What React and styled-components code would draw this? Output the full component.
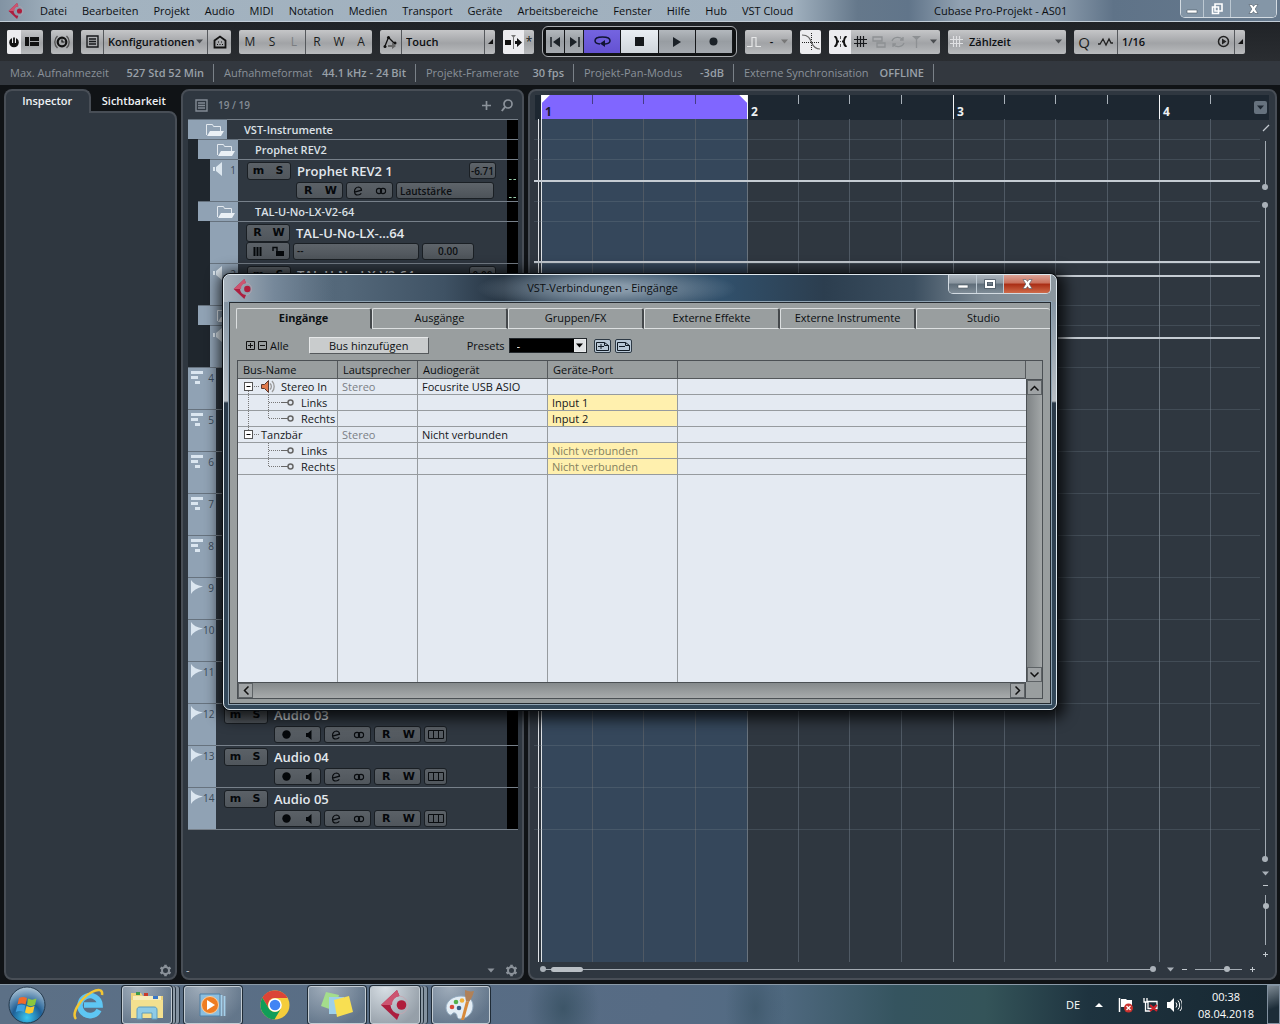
import React from "react";
import styled, { createGlobalStyle, css } from "styled-components";

const Global = createGlobalStyle`
  * { box-sizing: border-box; }
  html, body { margin: 0; height: 100%; background: #101316; }
  body { font-family: "Open Sans", "Noto Sans", sans-serif; font-size: 11px; line-height: 16px; color: #0c0f12; overflow: hidden; }
  button, select, input { font: inherit; color: inherit; margin: 0; padding: 0; border: 0; border-radius: 0; background: none; }
  svg { display: block; flex: none; }
  h1, h2, p { margin: 0; font-size: inherit; font-weight: inherit; }
`;

const Screen = styled.div`
  position: relative;
  display: flex;
  flex-direction: column;
  height: 100vh;
  min-height: 760px;
  overflow: hidden;
`;

/* ---------- menu bar ---------- */
const MenuBar = styled.header`
  display: flex;
  align-items: center;
  height: 22px;
  flex: none;
  padding-left: 8px;
  background: linear-gradient(90deg, #8293a3 0, #a3b3c0 60px, #a0b0be 62%, #65788b 67%, #61758a 71%, #91a1b1 75%, #91a1b1 82%, #5f7388 87%, #66798d 100%);
  border-bottom: 1px solid #c3ced8;
`;
const Menus = styled.nav`
  display: flex;
  gap: 15px;
  margin-left: 16px;
  flex: 1;
`;
const MenuItem = styled.button`
  line-height: 20px;
  white-space: nowrap;
`;
const WindowTitle = styled.h1`
  width: 134px;
  margin-right: 112px;
  white-space: nowrap;
`;
const Caption = styled.div`
  display: flex;
  align-self: flex-start;
  height: ${(p) => (p.$red ? 19 : 18)}px;
  margin-right: ${(p) => (p.$red ? 1 : 3)}px;
  border: 1px solid #d3dbe2;
  border-top: 0;
  border-radius: 0 0 5px 5px;
  overflow: hidden;
`;
const CaptionButton = styled.button`
  display: grid;
  place-items: center;
  width: ${(p) => p.$w}px;
  height: 100%;
  background: ${(p) => (p.$red ? "linear-gradient(#dba397, #c9705c 45%, #a92c14 50%, #cf6b4a)" : p.$dark ? "linear-gradient(#a9b3bc, #8b96a0 45%, #5f6d79 50%, #7f8c97)" : "#8496a7")};
  & + & { border-left: 1px solid #bcc8d2; }
`;

/* ---------- toolbar ---------- */
const Toolbar = styled.div`
  display: flex;
  align-items: center;
  gap: 8px;
  height: 39px;
  flex: none;
  padding: 0 7px;
  background: linear-gradient(#202327, #2a2d31);
`;
const Group = styled.div`
  display: flex;
  width: ${(p) => p.$w}px;
  height: 24px;
  flex: none;
  border-radius: 2px;
  overflow: hidden;
  background: linear-gradient(#c5c6c8, #a1a3a6 55%, #b9bbbd);
`;
const Tool = styled.button`
  display: grid;
  place-items: center;
  flex: ${(p) => (p.$w ? "none" : 1)};
  width: ${(p) => (p.$w ? p.$w + "px" : "auto")};
  height: 100%;
  font-size: ${(p) => (p.$big ? 15 : 12)}px;
  color: ${(p) => (p.$dim ? "#7a7d80" : "#1b1d20")};
  ${(p) => p.$on && css`background: #ececef;`}
  ${(p) => p.$line && css`border-left: 1px solid #55585c;`}
`;
const Pick = styled.label`
  display: flex;
  align-items: center;
  flex: 1;
  padding: 0 4px;
  ${(p) => p.$line && css`border-left: 1px solid #55585c;`}
`;
const PickSelect = styled.select`
  appearance: none;
  flex: 1;
  min-width: 0;
  height: 24px;
  font-weight: 600;
  outline: 0;
`;
const Transport = styled.div`
  display: flex;
  width: 195px;
  height: 31px;
  flex: none;
  padding: 3px;
  border: 1px solid #a9acb0;
  border-radius: 6px;
  background: #101214;
`;
const TransportButton = styled.button`
  display: grid;
  place-items: center;
  flex: ${(p) => p.$f};
  border-right: 1px solid #15171a;
  background: ${(p) => p.$bg || "linear-gradient(#b3b8bd, #989da2 50%, #a5aab0)"};
`;

/* ---------- info line ---------- */
const InfoLine = styled.dl`
  display: flex;
  align-items: center;
  height: 24px;
  flex: none;
  margin: 0 0 4px;
  background: #33383f;
  color: #8a9199;
`;
const InfoItem = styled.div`
  display: flex;
  justify-content: space-between;
  width: ${(p) => p.$w}px;
  height: 18px;
  padding: 1px 9px 0 10px;
  border-right: 1px solid #7a8188;
  white-space: nowrap;
  dt, dd { margin: 0; }
  dd { font-weight: 600; color: #99a0a8; }
`;

/* ---------- panels ---------- */
const Work = styled.main`
  display: flex;
  flex: 1;
  min-height: 0;
  gap: 4px;
  padding: 0 3px 4px 4px;
`;
const panel = css`
  background: #2f3740;
  border: 2px solid #484e56;
  border-radius: 8px;
`;
const Inspector = styled.aside`
  display: flex;
  flex-direction: column;
  width: 173px;
  flex: none;
`;
const Tabs = styled.div`display: flex;`;
const InspectorTab = styled.button`
  width: 88px;
  height: 24px;
  font-weight: 600;
  color: #eef1f4;
  ${(p) => p.$on && css`
    ${panel};
    border-bottom: 0;
    border-radius: 8px 8px 0 0;
    margin-bottom: -2px;
    padding-bottom: 2px;
    position: relative;
  `}
`;
const InspectorBody = styled.div`
  ${panel};
  border-top-left-radius: 0;
  flex: 1;
  display: flex;
  align-items: flex-end;
  justify-content: flex-end;
  padding: 0 3px 1px;
  margin-top: -2px;
`;
const TrackPanel = styled.section`
  ${panel};
  display: flex;
  flex-direction: column;
  width: 343px;
  flex: none;
`;
const TrackHeader = styled.div`
  display: flex;
  align-items: center;
  height: 28px;
  flex: none;
  gap: 10px;
  padding: 0 9px 0 12px;
  color: #838b94;
  font-size: 10px;
  font-weight: 600;
`;
const Spacer = styled.div`flex: 1;`;
const TrackRows = styled.ol`
  list-style: none;
  margin: 0 4px 0 5px;
  padding: 0;
  flex: 1;
  min-height: 0;
  overflow: hidden;
`;
const TrackRow = styled.li`
  display: flex;
  height: ${(p) => p.$h}px;
  padding-left: ${(p) => p.$indent}px;
  background: #1f262d;
`;
const Strip = styled.div`
  display: flex;
  justify-content: ${(p) => (p.$folder ? "flex-end" : "space-between")};
  width: ${(p) => p.$w}px;
  flex: none;
  padding: ${(p) => (p.$folder ? "3px 2px 0" : "2px 2px 0")};
  background: #90a2b4;
  border-top: 1px solid #66727e;
  color: #3b4a59;
  font-size: 10px;
`;
const TrackMain = styled.div`
  flex: 1;
  min-width: 0;
  border-top: 1px solid #77808a;
  background: #2f3740;
  padding: ${(p) => p.$pad || "1px 8px 0"};
`;
const Meter = styled.div`
  width: 11px;
  flex: none;
  border-top: 1px solid #77808a;
  background: #000;
`;
const MeterMarks = styled.div`
  display: flex;
  flex-direction: column;
  gap: 17px;
  padding: 19px 2px 0;
  &::before, &::after { content: ""; border-top: 1px dashed #9ccfae; }
`;
const FolderName = styled.span`
  display: block;
  padding-left: ${(p) => p.$x}px;
  font-weight: 600;
  line-height: 17px;
  color: #dbe0e6;
`;
const Line = styled.div`
  display: flex;
  align-items: center;
  gap: 3px;
  height: ${(p) => p.$h || 19}px;
  padding-left: ${(p) => p.$x || 0}px;
`;
const TrackName = styled.span`
  flex: 1;
  padding-left: 3px;
  font-size: 13px;
  font-weight: 600;
  color: #e3e8ed;
  white-space: nowrap;
`;
const Keys = styled.div`
  display: flex;
  width: ${(p) => p.$w || 44}px;
  height: ${(p) => p.$h || 18}px;
  flex: none;
  border: 1px solid #1a1f24;
  border-radius: 3px;
  background: linear-gradient(#5b6167, #50565c);
`;
const Key = styled.button`
  display: grid;
  place-items: center;
  flex: 1;
  min-width: 0;
  font: 700 11px/14px "DejaVu Sans", sans-serif;
  color: #05080b;
  & + & { border-left: ${(p) => (p.$join ? "0" : "1px solid #1a1f24")}; }
`;
const Field = styled.button`
  width: ${(p) => p.$w}px;
  height: 17px;
  flex: none;
  padding: ${(p) => (p.$center ? 0 : "0 3px")};
  border: 1px solid #1a1f24;
  border-radius: 3px;
  background: linear-gradient(#5e646a, #4d5359);
  font-size: 10px;
  font-weight: 600;
  line-height: 14px;
  text-align: ${(p) => (p.$center ? "center" : "left")};
`;
const PanelFoot = styled.div`
  display: flex;
  align-items: center;
  gap: 9px;
  height: 16px;
  flex: none;
  padding: 0 4px 0 3px;
  color: #c3c9cf;
`;

/* ---------- arrangement ---------- */
const Arrange = styled.section`
  ${panel};
  flex: 1;
  min-width: 0;
  display: flex;
  flex-direction: column;
  padding: 4px 6px 0 4px;
`;
const Ruler = styled.div`
  display: flex;
  height: 25px;
  flex: none;
  margin-bottom: -1px;
  padding-left: 6px;
  background: #1d2731;
  border-left: 1px solid #2f3740;
`;
const Bars = styled.div`
  display: flex;
  flex: 1;
  min-width: 0;
  overflow: hidden;
`;
const tick = (c) => `linear-gradient(${c}, ${c})`;
const Bar = styled.div`
  display: flex;
  align-items: flex-end;
  width: 206px;
  flex: none;
  padding-left: 3px;
  border-left: 1px solid #f4f6f8;
  font-size: 12px;
  font-weight: 700;
  color: ${(p) => (p.$on ? "#1c1c30" : "#eef1f4")};
  background: ${(p) => {
    const c = p.$on ? "#463b86" : "#a9b1b9";
    const corners = p.$on
      ? "linear-gradient(135deg, #fff 5px, transparent 6px), linear-gradient(225deg, #fff 5px, transparent 6px),"
      : "";
    return `${corners} ${tick(c)} 50px 0/1px 9px no-repeat, ${tick(c)} 101px 0/1px 9px no-repeat, ${tick(c)} 153px 0/1px 9px no-repeat, ${p.$on ? "#8066ff" : "#1d2731"}`;
  }};
`;
const RulerMenu = styled.button`
  display: grid;
  place-items: center;
  width: 13px;
  height: 13px;
  margin: 6px 2px 0 8px;
  border-radius: 2px;
  background: #66727e;
`;
const ArrangeBody = styled.div`
  display: flex;
  flex: 1;
  min-height: 0;
`;
const Grid = styled.div`
  flex: 1;
  min-width: 0;
  overflow: hidden;
  background:
    ${tick("#dfe3e7")} 4px 0/1px 100% no-repeat,
    ${tick("#dfe3e7")} 7px 0/1px 100% no-repeat,
    repeating-linear-gradient(90deg, transparent 0 50px, #4f5964 50px 51px, transparent 51px 101px, #4f5964 101px 102px, transparent 102px 153px, #4f5964 153px 154px, transparent 154px 205px, #69737d 205px 206px) 8px 0 no-repeat,
    ${tick("#35475b")} 8px 0/205px 100% no-repeat;
`;
const Lane = styled.div`
  height: ${(p) => p.$h}px;
  border-top: 1px solid rgba(120, 132, 144, 0.28);
  &:first-child { border-top-color: transparent; }
`;
const Automation = styled.div`
  margin-top: ${(p) => p.$y}px;
  height: 2px;
  background: #c5ccd3;
`;
const SideTools = styled.div`
  display: flex;
  flex-direction: column;
  align-items: center;
  width: 11px;
  flex: none;
  margin-right: -2px;
  padding: 5px 0 4px;
  gap: 6px;
`;
const VScroll = styled.div`
  position: relative;
  width: 1px;
  margin: 3px 0;
  flex: ${(p) => (p.$h ? "none" : 1)};
  height: ${(p) => (p.$h ? p.$h + "px" : "auto")};
  background: #a3abb3;
`;
const Dot = styled.i`
  position: absolute;
  width: 6px;
  height: 6px;
  border-radius: 3px;
  background: #a9b0b8;
  ${(p) => p.$at};
`;
const BottomTools = styled.div`
  display: flex;
  align-items: center;
  height: 16px;
  flex: none;
  gap: 8px;
  padding: 0 14px 2px 9px;
  color: #c3c9cf;
`;
const HScroll = styled.div`
  position: relative;
  flex: 1;
  height: 1px;
  margin-right: 6px;
  background: #a3abb3;
`;
const Thumb = styled.i`
  position: absolute;
  left: 8px;
  top: -2px;
  width: 32px;
  height: 5px;
  border-radius: 3px;
  background: #b9bfc5;
`;
const Zoom = styled.input`
  appearance: none;
  outline: 0;
  ${(p) => (p.$v ? "writing-mode: vertical-lr; width: 8px; height: 50px;" : "width: 47px; height: 8px;")}
  background: ${tick("#a3abb3")} center / ${(p) => (p.$v ? "1px 100%" : "100% 1px")} no-repeat;
  &::-webkit-slider-thumb {
    appearance: none;
    width: 6px;
    height: 6px;
    border-radius: 3px;
    background: #b0b7be;
  }
`;

/* ---------- dialog ---------- */
const DialogLayer = styled.div`
  position: absolute;
  inset: 0;
  display: flex;
  justify-content: center;
  align-items: flex-start;
  padding-top: 274px;
  pointer-events: none;
`;
const Dialog = styled.section`
  display: flex;
  flex-direction: column;
  width: 834px;
  height: 436px;
  padding: 0 5px 5px;
  pointer-events: auto;
  border: 1px solid #dfe8ee;
  border-radius: 7px;
  background: linear-gradient(#8796a4 0, #8796a4 28px, #b8bec4 126px, #2b3a49 128px, #33485a 100%);
  box-shadow: 0 0 0 1px #0b0f13, 2px 3px 14px 6px rgba(0, 0, 0, 0.75);
`;
const TitleBar = styled.header`
  display: flex;
  align-items: center;
  height: 27px;
  flex: none;
  margin: 0 -5px;
  padding: 0 4px 0 9px;
  border-radius: 6px 6px 0 0;
  background:
    radial-gradient(ellipse 130px 22px at 46% 50%, rgba(150, 167, 182, 0.85) 20%, transparent),
    linear-gradient(90deg, #a7b2bc 0, #76889a 50px, #51647600 110px),
    linear-gradient(90deg, #516476 0, #54687a 120px, #3f5264 220px, #263442 280px, #33475a 340px, #31506b 500px, #2c3e4f 600px, #3c4f60 690px, #7d8a95 760px, #8c979f 100%);
`;
const DialogTitle = styled.h2`
  flex: 1;
  padding: 0 0 2px 4px;
  text-align: center;
`;
const Client = styled.div`
  display: flex;
  flex-direction: column;
  flex: 1;
  min-height: 0;
  padding: 5px 0 4px;
  border: 1px solid #242a30;
  outline: 1px solid #8fa3b3;
  background: #999e9f;
`;
const DialogTabs = styled.div`
  display: flex;
  margin-left: 6px;
`;
const DialogTab = styled.button`
  flex: 1;
  height: 21px;
  padding-bottom: 2px;
  border-top: 1px solid #dcdfe0;
  border-left: 1px solid #dcdfe0;
  border-right: 2px solid #44484b;
  border-bottom: 1px solid ${(p) => (p.$on ? "transparent" : "#dcdfe0")};
  border-radius: 2px 3px 0 0;
  font-weight: ${(p) => (p.$on ? 700 : 400)};
  &:last-child { border-right: 0; }
`;
const Options = styled.div`
  display: flex;
  align-items: center;
  height: 31px;
  flex: none;
  padding: 2px 16px 0;
  gap: 4px;
`;
const TreeToggle = styled.button`
  display: flex;
  align-items: center;
  gap: 3px;
`;
const AddBus = styled.button`
  width: 120px;
  height: 17px;
  margin: 0 34px 0 16px;
  background: #c9cccd;
  border: 1px solid;
  border-color: #e6e8e9 #55595c #55595c #e6e8e9;
  line-height: 14px;
`;
const PresetBox = styled.div`
  display: flex;
  width: 78px;
  height: 15px;
  margin-right: 3px;
  border: 1px solid #23282c;
  background: #000;
`;
const PresetSelect = styled.select`
  appearance: none;
  flex: 1;
  padding-left: 7px;
  color: #fff;
  line-height: 13px;
  outline: 0;
`;
const SmallButton = styled.button`
  display: grid;
  place-items: center;
  width: ${(p) => p.$w || 17}px;
  height: ${(p) => p.$h || 14}px;
  border: 1px solid ${(p) => (p.$light ? "#e9ebec" : "#2d3944")};
  border-radius: ${(p) => (p.$light ? 0 : 2)}px;
  background: ${(p) => (p.$light ? "#dfe2e4" : "#b9c8d6")};
`;
const TableFrame = styled.div`
  display: grid;
  grid-template: minmax(0, 1fr) 16px / minmax(0, 1fr) 16px;
  flex: 1;
  min-height: 0;
  margin: 0 7px 0 7px;
  border: 1px solid #4b5054;
  background: #999e9f;
`;
const BusTable = styled.table`
  width: 100%;
  height: 100%;
  table-layout: fixed;
  border-collapse: separate;
  border-spacing: 0;
  background: #e4eaf2;
  th, td {
    height: 16px;
    padding: 0 0 0 4px;
    border-right: 1px solid #969b9f;
    border-bottom: 1px solid #969b9f;
    line-height: 15px;
    text-align: left;
    font-weight: 400;
    white-space: nowrap;
    overflow: hidden;
  }
  th { height: 18px; padding-left: 5px; border-color: #55595c; background: #999e9f; }
  td:last-child { border-right: 0; }
`;
const Cell = styled.td`
  color: ${(p) => (p.$dim ? "#7b7f86" : "#14171a")};
  ${(p) => p.$port && css`background: #fff0ae; ${p.$dim && "color: #84805f;"}`}
`;
const RestRow = styled.tr`
  && td { height: auto; border-bottom: 0; }
`;
const NameCell = styled.div`
  display: flex;
  height: 15px;
  margin-left: -4px;
`;
const ScrollColumn = styled.div`
  display: flex;
  flex-direction: column;
  justify-content: space-between;
  margin-top: 18px;
  border: solid #4b5054;
  border-width: 1px 0 0 1px;
  background: linear-gradient(90deg, #7f8486, #a3a7a8);
`;
const ScrollRow = styled.div`
  display: flex;
  justify-content: space-between;
  border: solid #4b5054;
  border-width: 1px 1px 0 0;
  background: linear-gradient(#858a8c, #a8abac);
`;
const ScrollButton = styled.button`
  display: grid;
  place-items: center;
  width: 15px;
  height: 15px;
  border: 1px solid #5d6265;
  background: #9fa3a5;
`;

/* ---------- taskbar ---------- */
const Taskbar = styled.footer`
  display: flex;
  align-items: center;
  height: 40px;
  flex: none;
  padding-left: 8px;
  border-top: 1px solid #8a9aa8;
  background:
    radial-gradient(ellipse 36px 50px at 44% 60%, rgba(50, 76, 92, 0.7), transparent),
    radial-gradient(ellipse 30px 60px at 59% 60%, rgba(50, 76, 92, 0.5), transparent),
    linear-gradient(90deg, #5c7086 0, #566b84 52%, #526b83 60%, #35545f 70%, #345459 77%, #1e333f 85%, #172731 100%);
`;
const Apps = styled.div`
  display: flex;
  align-items: center;
  flex: 1;
  height: 100%;
`;
const AppButton = styled.button`
  display: grid;
  place-items: center;
  width: ${(p) => p.$w}px;
  height: 38px;
  margin-right: ${(p) => p.$r || 0}px;
  ${(p) => p.$open && css`
    border: 1px solid #c3ccd3;
    border-radius: 3px;
    background: radial-gradient(ellipse at 30% 0, rgba(230, 236, 240, ${p.$on ? 0.9 : 0.5}), rgba(${p.$on ? "165, 172, 178" : "120, 136, 150"}, ${p.$on ? 0.8 : 0.3}) 80%);
    box-shadow: 0 0 0 1px #1f2b36;
  `}
  ${(p) => p.$stack && css`
    box-shadow: 0 0 0 1px #1f2b36, 3px 0 0 0 #8e9ba7, 4px 0 0 0 #26333f, 7px 0 0 0 #8492a0, 8px 0 0 0 #26333f;
  `}
`;
const Tray = styled.div`
  display: flex;
  align-items: center;
  gap: 9px;
  color: #fff;
`;
const Clock = styled.time`
  width: 64px;
  margin-left: 3px;
  text-align: center;
  line-height: 17px;
`;
const ShowDesktop = styled.button`
  width: 13px;
  height: 39px;
  border: 1px solid #8291a0;
  background: linear-gradient(160deg, #7e8a94, #1c2c38 60%);
`;

/* ---------- drawings ---------- */
const Svg = ({ w = 16, h = 16, vb, children, ...r }) => (
  <svg width={w} height={h} viewBox={vb || `0 0 ${w} ${h}`} fill="none" aria-hidden="true" {...r}>{children}</svg>
);
const Down = ({ c = "#4a4d50", w = 7 }) => <Svg w={w} h={5} vb="0 0 7 5"><path d="M0 .5h7L3.500 4.500z" fill={c} /></Svg>;
const Corner = () => <Svg w={5} h={5}><path d="M5 0v5H0z" fill="#111" /></Svg>;
const CubaseMark = ({ s = 18 }) => (
  <Svg w={s} h={s} vb="0 0 28 30">
    <path d="M0 15 16 0l2.500 6a9 9 0 0 0 0 18L16 30z" fill="#ac1f3f" />
    <path d="M0 15 16 0l2.500 6A9 9 0 0 0 11 15z" fill="#cc5470" />
    <path d="M18.500 6a9 9 0 0 1 8.500 9 9 9 0 0 1-8.500 9" stroke="#c9a3ae" strokeWidth=".8" />
    <circle cx="20.500" cy="15" r="4.800" fill="#b01d3c" />
  </Svg>
);
const Gear = () => (
  <Svg w={13} h={13} vb="0 0 13 13">
    <circle cx="6.500" cy="6.500" r="3.500" stroke="#8b929a" strokeWidth="2" />
    <path d="M6.500.8v2M6.500 10.200v2M1.500 3.600l1.800 1M9.700 8.400l1.800 1M1.500 9.400l1.800-1M9.700 4.600l1.800-1" stroke="#8b929a" strokeWidth="2.600" />
  </Svg>
);
const ListIcon = ({ c = "#17191c", s = 13 }) => <Svg w={s} h={s} vb="0 0 13 13"><path d="M1 1h11v11H1zM3 4h7M3 6.500h7M3 9h7" stroke={c} strokeWidth="1.400" /></Svg>;
const GridIcon = ({ c = "#17191c" }) => <Svg w={13} h={13}><path d="M3.500 1v11M6.500 1v11M9.500 1v11M0 4.500h13M0 8.500h13" stroke={c} strokeWidth="1.200" /></Svg>;
const FolderIcon = () => (
  <Svg w={20} h={14}>
    <path d="M1.500 12V1.500h6l1 2h7V8" stroke="#e3e9ef" />
    <path d="M5 8h14l-3 5H2z" fill="#eaf0f5" />
  </Svg>
);
const SpeakerIcon = () => <Svg w={12} h={14}><path d="M1 5h2v4H1zM4 5l6-5v14L4 9z" fill="#dce6ee" /></Svg>;
const MidiIcon = () => <Svg w={14} h={14}><path d="M1 1h12v3H1zM1 6h7v3H1zM5 11h5v3H5z" fill="#dbe6f0" /></Svg>;
const WaveIcon = () => <Svg w={13} h={14}><path d="M1 0c2 3.500 6 5.500 12 6.500C7 8 3 10.500 1 14z" fill="#dbe6f0" /></Svg>;
const MonIcon = () => <Svg w={8} h={10}><path d="M1 3h2v4H1zM3 3l3.500-3v10L3 7z" fill="#05080b" /></Svg>;
const RecIcon = () => <Svg w={9} h={9}><circle cx="4.500" cy="4.500" r="4.200" fill="#05080b" /></Svg>;
const EIcon = () => <Svg w={10} h={10}><path d="M1.500 6.200 8.500 4.200A3.300 3.300 0 0 0 5.600 1C3 1 1.500 3.200 1.500 5.400S3 9 5 9s2.600-.7 3.300-1.600" stroke="#0a0d10" strokeWidth="1.200" /></Svg>;
const LinkIcon = () => <Svg w={12} h={8}><circle cx="4" cy="4" r="2.600" stroke="#0a0d10" strokeWidth="1.100" /><circle cx="8" cy="4" r="2.600" stroke="#0a0d10" strokeWidth="1.100" /></Svg>;
const LaneIcon = () => <Svg w={16} h={9}><path d="M.5.500h15v8H.5zM5.500.500v8M10.500.500v8" stroke="#0a0d10" /></Svg>;
const Minus = ({ c = "#fff" }) => <Svg w={12} h={12}><path d="M1 7h10v3H1z" fill={c} stroke="#4d5a66" strokeWidth=".6" /></Svg>;
const Cross = () => <Svg w={11} h={10}><path d="M1 .5h3l1.500 2L7 .5h3L7.200 5 10 9.500H7l-1.500-2-1.500 2H1L3.800 5z" fill="#fff" stroke="#4d5a66" strokeWidth=".6" /></Svg>;

/* ---------- data ---------- */
const menus = ["Datei", "Bearbeiten", "Projekt", "Audio", "MIDI", "Notation", "Medien", "Transport", "Geräte", "Arbeitsbereiche", "Fenster", "Hilfe", "Hub", "VST Cloud"];
const info = [
  ["Max. Aufnahmezeit", "527 Std 52 Min", 214],
  ["Aufnahmeformat", "44.1 kHz - 24 Bit", 202],
  ["Projekt-Framerate", "30 fps", 158],
  ["Projekt-Pan-Modus", "-3dB", 160],
  ["Externe Synchronisation", "OFFLINE", 200],
];
const tracks = [
  { kind: "folder", name: "VST-Instrumente", indent: 0, w: 39, x: 9 },
  { kind: "folder", name: "Prophet REV2", indent: 10, w: 40, x: 9 },
  { kind: "return", no: 1, name: "Prophet REV2 1", level: "-6.71", line: 20 },
  { kind: "folder", name: "TAL-U-No-LX-V2-64", indent: 10, w: 40, x: 9 },
  { kind: "instrument", name: "TAL-U-No-LX-...64", line: 39 },
  { kind: "return", no: 2, name: "TAL-U-No-LX-V2-64", level: "0.00", line: 11 },
  { kind: "folder", name: "", indent: 10, w: 40, x: 9 },
  { kind: "return", no: 3, name: "", line: 11 },
  ...[4, 5, 6, 7, 8].map((no) => ({ kind: "midi", no })),
  ...[9, 10, 11].map((no) => ({ kind: "audio", no })),
  { kind: "audio", no: 12, name: "Audio 03" },
  { kind: "audio", no: 13, name: "Audio 04" },
  { kind: "audio", no: 14, name: "Audio 05" },
];
const heightOf = (t) => (t.kind === "folder" ? 20 : 42);
const dialogTabs = ["Eingänge", "Ausgänge", "Gruppen/FX", "Externe Effekte", "Externe Instrumente", "Studio"];
const buses = [
  { type: "bus", name: "Stereo In", icon: true, speaker: "Stereo", device: "Focusrite USB ASIO", first: true },
  { type: "port", name: "Links", port: "Input 1", rail: true },
  { type: "port", name: "Rechts", port: "Input 2", rail: true, end: true },
  { type: "bus", name: "Tanzbär", speaker: "Stereo", device: "Nicht verbunden" },
  { type: "port", name: "Links", port: "Nicht verbunden", dim: true },
  { type: "port", name: "Rechts", port: "Nicht verbunden", dim: true, end: true },
];

/* ---------- pieces ---------- */
const MuteSolo = () => (
  <Keys><Key aria-label="Mute">m</Key><Key aria-label="Solo">S</Key></Keys>
);
const ReadWrite = ({ w, h, join }) => (
  <Keys $w={w} $h={h}><Key $join={join}>R</Key><Key $join={join}>W</Key></Keys>
);
const EditKeys = () => (
  <Keys $w={47} $h={17}>
    <Key $join aria-label="Kanal bearbeiten"><EIcon /></Key>
    <Key $join aria-label="Freeze"><LinkIcon /></Key>
  </Keys>
);

function TrackContent({ t }) {
  if (t.kind === "folder") return <TrackMain><FolderName $x={t.x}>{t.name}</FolderName></TrackMain>;
  if (t.kind === "return")
    return (
      <TrackMain $pad="1px 11px 0 9px">
        {t.name && (
          <>
            <Line><MuteSolo /><TrackName>{t.name}</TrackName><Field $w={27} $center>{t.level}</Field></Line>
            <Line $x={49} $h={21}><ReadWrite w={47} h={17} join /><EditKeys /><Field $w={98}>Lautstärke</Field></Line>
          </>
        )}
      </TrackMain>
    );
  if (t.kind === "instrument")
    return (
      <TrackMain $pad="2px 11px 0 8px">
        <Line $h={18}><ReadWrite /><TrackName>{t.name}</TrackName></Line>
        <Line $h={18}>
          <Keys>
            <Key aria-label="Instrument"><Svg w={9} h={9}><path d="M1.500 0v9M4.500 0v9M7.500 0v9" stroke="#05080b" strokeWidth="2" /></Svg></Key>
            <Key aria-label="Sperren"><Svg w={13} h={11}><path d="M1 5V1.500h4V5" stroke="#05080b" strokeWidth="1.400" /><path d="M4 5h8v5H4z" fill="#05080b" /></Svg></Key>
          </Keys>
          <Field $w={126}>--</Field>
          <Field $w={52} $center>0.00</Field>
        </Line>
      </TrackMain>
    );
  return (
    <TrackMain>
      {t.name && (
        <>
          <Line><MuteSolo /><TrackName>{t.name}</TrackName></Line>
          <Line $x={50} $h={21}>
            <Keys $w={47} $h={17}><Key $join aria-label="Aufnahme"><RecIcon /></Key><Key $join aria-label="Monitor"><MonIcon /></Key></Keys>
            <EditKeys />
            <ReadWrite w={47} h={17} join />
            <Keys $w={23} $h={17}><Key aria-label="Spuren"><LaneIcon /></Key></Keys>
          </Line>
        </>
      )}
    </TrackMain>
  );
}

function Track({ t }) {
  const folder = t.kind === "folder";
  const inner = t.kind === "return" || t.kind === "instrument";
  return (
    <TrackRow $h={heightOf(t)} $indent={folder ? t.indent : inner ? 22 : 0}>
      <Strip $w={folder ? t.w : 28} $folder={folder}>
        {folder && <FolderIcon />}
        {t.kind === "return" && <SpeakerIcon />}
        {t.kind === "midi" && <MidiIcon />}
        {t.kind === "audio" && <WaveIcon />}
        {t.no}
      </Strip>
      <TrackContent t={t} />
      <Meter>{t.kind === "return" && t.no === 1 && <MeterMarks />}</Meter>
    </TrackRow>
  );
}

function TreeCell({ b }) {
  if (b.type === "bus")
    return (
      <NameCell>
        <Svg w={b.icon ? 43 : 23} h={15}>
          <path d={b.first ? "M10.500 12v3" : "M10.500 0v3"} stroke="#777" strokeDasharray="1 1" />
          <rect x="6.500" y="3.500" width="8" height="8" fill="#fff" stroke="#555" />
          <path d="M8.500 7.500h4" stroke="#000" />
          <path d="M16 7.500h6" stroke="#777" strokeDasharray="1 1" />
          {b.icon && (
            <>
              <path d="M23.500 5.500h3l4-4v12l-4-4h-3z" fill="#e07a4c" stroke="#5a3a30" />
              <path d="M32 4.500a4 4 0 0 1 0 6M34 2a8 8 0 0 1 0 11" stroke="#999" strokeWidth="1.300" />
            </>
          )}
        </Svg>
        {b.name}
      </NameCell>
    );
  return (
    <NameCell>
      <Svg w={63} h={15}>
        {b.rail && <path d="M10.500 0v15" stroke="#777" strokeDasharray="1 1" />}
        <path d={b.end ? "M30.500 0v8" : "M30.500 0v15"} stroke="#777" strokeDasharray="1 1" />
        <path d="M31 7.500h12" stroke="#777" strokeDasharray="1 1" />
        <path d="M43 7.500h7" stroke="#666" />
        <circle cx="52.500" cy="7.500" r="2.500" stroke="#666" strokeWidth="1.500" />
      </Svg>
      {b.name}
    </NameCell>
  );
}

function ConnectionsDialog() {
  return (
    <DialogLayer>
      <Dialog role="dialog" aria-labelledby="dialog-title">
        <TitleBar>
          <CubaseMark s={20} />
          <DialogTitle id="dialog-title">VST-Verbindungen - Eingänge</DialogTitle>
          <Caption $red>
            <CaptionButton $w={27} $dark aria-label="Minimieren"><Minus /></CaptionButton>
            <CaptionButton $w={27} $dark aria-label="Maximieren"><Svg w={12} h={10}><path d="M2 2h8v6H2z" stroke="#4d5a66" strokeWidth="3.600" /><path d="M2 2h8v6H2z" stroke="#fff" strokeWidth="2" /></Svg></CaptionButton>
            <CaptionButton $w={47} $red aria-label="Schließen"><Cross /></CaptionButton>
          </Caption>
        </TitleBar>
        <Client>
          <DialogTabs role="tablist">
            {dialogTabs.map((t, i) => <DialogTab key={t} role="tab" aria-selected={i === 0} $on={i === 0}>{t}</DialogTab>)}
          </DialogTabs>
          <Options>
            <TreeToggle>
              <Svg w={9} h={9}><path d="M.5.500h8v8h-8zM2 4.500h5M4.500 2v5" stroke="#111" /></Svg>
              <Svg w={9} h={9}><path d="M.5.500h8v8h-8zM2 4.500h5" stroke="#111" /></Svg>
              Alle
            </TreeToggle>
            <AddBus>Bus hinzufügen</AddBus>
            <label htmlFor="presets">Presets</label>
            <PresetBox>
              <PresetSelect id="presets"><option>-</option></PresetSelect>
              <SmallButton $w={12} $h={13} $light aria-label="Presets öffnen"><Down c="#000" /></SmallButton>
            </PresetBox>
            <SmallButton aria-label="Preset speichern"><Svg w={13} h={10}><path d="M8.500 1.500h-8v8h12v-5l-4-3v3h4M2 5.500h6M5 3v5" stroke="#101a24" /></Svg></SmallButton>
            <SmallButton aria-label="Preset löschen"><Svg w={13} h={10}><path d="M8.500 1.500h-8v8h12v-5l-4-3v3h4M2 5.500h6" stroke="#101a24" /></Svg></SmallButton>
          </Options>
          <TableFrame>
            <BusTable>
              <colgroup><col style={{ width: 100 }} /><col style={{ width: 80 }} /><col style={{ width: 130 }} /><col style={{ width: 130 }} /><col /></colgroup>
              <thead><tr><th>Bus-Name</th><th>Lautsprecher</th><th>Audiogerät</th><th>Geräte-Port</th><th /></tr></thead>
              <tbody>
                {buses.map((b, i) => (
                  <tr key={i}>
                    <Cell><TreeCell b={b} /></Cell>
                    <Cell $dim>{b.speaker}</Cell>
                    <Cell>{b.device}</Cell>
                    <Cell $port={b.type === "port"} $dim={b.dim}>{b.port}</Cell>
                    <Cell />
                  </tr>
                ))}
                <RestRow><td /><td /><td /><td /><td /></RestRow>
              </tbody>
            </BusTable>
            <ScrollColumn>
              <ScrollButton aria-label="Nach oben"><Svg w={9} h={6}><path d="M.5 5.500l4-4 4 4" stroke="#111" strokeWidth="1.500" /></Svg></ScrollButton>
              <ScrollButton aria-label="Nach unten"><Svg w={9} h={6}><path d="M.5.500l4 4 4-4" stroke="#111" strokeWidth="1.500" /></Svg></ScrollButton>
            </ScrollColumn>
            <ScrollRow>
              <ScrollButton aria-label="Nach links"><Svg w={6} h={9}><path d="M5.500.500l-4 4 4 4" stroke="#111" strokeWidth="1.500" /></Svg></ScrollButton>
              <ScrollButton aria-label="Nach rechts"><Svg w={6} h={9}><path d="M.5.500l4 4-4 4" stroke="#111" strokeWidth="1.500" /></Svg></ScrollButton>
            </ScrollRow>
          </TableFrame>
        </Client>
      </Dialog>
    </DialogLayer>
  );
}

function MainToolbar() {
  return (
    <Toolbar>
      <Group $w={36}>
        <Tool $w={14} $on aria-label="Aktivieren"><Svg w={12} h={12}><circle cx="6" cy="6.500" r="4.800" fill="#111" /><path d="M6 0v7" stroke="#ececef" strokeWidth="4" /><path d="M6 1.500v6" stroke="#111" strokeWidth="1.800" /></Svg></Tool>
        <Tool aria-label="Fensterlayout"><Svg w={14} h={9}><path d="M0 0h4v9H0zM5 0h9v4H5zM5 5h9v4H5z" fill="#111" /></Svg></Tool>
      </Group>
      <Group $w={22}><Tool aria-label="Zeit"><Svg w={18} h={14}><circle cx="9" cy="7" r="4.300" stroke="#111" strokeWidth="2.200" /><path d="M9 4.500V7h2.500" stroke="#111" strokeWidth="1.200" /><path d="M4.500 1a8 8 0 0 0 0 12M13.500 1a8 8 0 0 1 0 12" stroke="#555" strokeWidth="1.400" /></Svg></Tool></Group>
      <Group $w={150}>
        <Tool $w={22} aria-label="Liste"><ListIcon /></Tool>
        <Pick $line><PickSelect aria-label="Konfigurationen"><option>Konfigurationen</option></PickSelect><Down /></Pick>
        <Tool $w={24} $line aria-label="Einrichten"><Svg w={14} h={14}><path d="M1.500 12.500v-7L7 1.500l5.500 4v7z" stroke="#111" strokeWidth="1.800" /><path d="M4 9.500h1M6.500 9.500h1M9 9.500h1M5 7h1M8 7h1" stroke="#111" /></Svg></Tool>
      </Group>
      <Group $w={133}>
        <Tool>M</Tool><Tool>S</Tool><Tool $dim>L</Tool><Tool $line>R</Tool><Tool>W</Tool><Tool>A</Tool>
      </Group>
      <Group $w={115}>
        <Tool $w={21} aria-label="Automation"><Svg w={15} h={14}><path d="M2 11 5.500 2.500 11 8" stroke="#111" strokeWidth="1.300" /><circle cx="2" cy="11.500" r="1.500" fill="#111" /><circle cx="5.500" cy="2.500" r="1.500" fill="#111" /><circle cx="12" cy="8" r="1.500" fill="#111" /><path d="M5 10h4V7.500l4 3.500-4 3v-2H5z" fill="#666" /></Svg></Tool>
        <Pick $line><PickSelect aria-label="Automationsmodus"><option>Touch</option></PickSelect></Pick>
        <Tool $w={11} $line aria-label="Automationsfeld"><Corner /></Tool>
      </Group>
      <Group $w={31}>
        <Tool $w={21} $on aria-label="Auto-Scroll"><Svg w={17} h={14}><path d="M0 5h6v5H0z" fill="#111" /><path d="M8.500 2v12" stroke="#777" /><path d="M6 0h5L8.500 3z" fill="#777" /><path d="M10 6h2V3l5 4.500-5 4.500V9h-2z" fill="#111" /></Svg></Tool>
        <Tool>*</Tool>
      </Group>
      <Transport>
        <TransportButton $f={19} aria-label="Zum Anfang"><Svg w={11} h={10}><path d="M1 0v10" stroke="#1b2127" strokeWidth="1.500" /><path d="M10 0v10L3 5z" fill="#1b2127" /></Svg></TransportButton>
        <TransportButton $f={19} aria-label="Zum Ende"><Svg w={11} h={10}><path d="M10 0v10" stroke="#1b2127" strokeWidth="1.500" /><path d="M1 0v10l7-5z" fill="#1b2127" /></Svg></TransportButton>
        <TransportButton $f={38} $bg="linear-gradient(#7464e0, #6452d2)" aria-label="Cycle"><Svg w={17} h={13}><path d="M6 9C2.500 8.700 1 7.400 1 5.700 1 3.600 4 2 8.500 2S16 3.600 16 5.700c0 1.700-2 3-5 3.300" stroke="#111434" strokeWidth="1.500" /><path d="M11 5v7L6 8.500z" fill="#111434" /></Svg></TransportButton>
        <TransportButton $f={38} $bg="linear-gradient(#e9eef3, #cfd5db)" aria-label="Stopp"><Svg w={9} h={9}><path d="M0 0h9v9H0z" fill="#16191c" /></Svg></TransportButton>
        <TransportButton $f={38} aria-label="Start"><Svg w={8} h={10}><path d="M0 0v10l8-5z" fill="#1b2127" /></Svg></TransportButton>
        <TransportButton $f={38} aria-label="Aufnahme"><Svg w={9} h={9}><circle cx="4.500" cy="4.500" r="4" fill="#1b2127" /></Svg></TransportButton>
      </Transport>
      <Group $w={47}>
        <Tool $w={18} aria-label="Nudge"><Svg w={14} h={12}><path d="M0 10.500h5v-9h4v9h5" stroke="#e6e7e8" strokeWidth="1.200" /></Svg></Tool>
        <Pick><PickSelect aria-label="Schrittweite"><option>&nbsp;-</option></PickSelect><Down c="#777" /></Pick>
      </Group>
      <Group $w={21}><Tool $on aria-label="Nulldurchgang"><Svg w={18} h={18}><path d="M9.500 0v18M0 9.500h18" stroke="#222" strokeDasharray="1 1" /><path d="M0 2c7 0 8 4 9.500 7.500S13 16 18 16" stroke="#666" strokeWidth="1.200" /></Svg></Tool></Group>
      <Group $w={111}>
        <Tool $w={22} $on aria-label="Raster"><Svg w={13} h={11}><path d="M.5 0C4 2.500 4 8.500.5 11M12.500 0C9 2.500 9 8.500 12.500 11M3 5.500h2M8 5.500h2" stroke="#111" strokeWidth="2" /><path d="M6.500 0v3M6.500 8v3M6.500 5v1" stroke="#555" /></Svg></Tool>
        <Tool aria-label="Rastermodus"><GridIcon /></Tool>
        <Tool aria-label="Ereignisse"><Svg w={14} h={12}><path d="M1 1h9v4H1zM5 7h8v4H5z" stroke="#8d9093" strokeWidth="1.300" /></Svg></Tool>
        <Tool aria-label="Relativ"><Svg w={14} h={12}><path d="M1 5a6 5 0 0 1 11-1M13 7a6 5 0 0 1-11 1M12 1v3H9M2 11V8h3" stroke="#8d9093" strokeWidth="1.300" /></Svg></Tool>
        <Tool aria-label="Cursor"><Svg w={9} h={12}><path d="M4.500 2v10" stroke="#8d9093" strokeWidth="1.300" /><path d="M0 0h9L4.500 4z" fill="#8d9093" /></Svg></Tool>
        <Tool $w={14} aria-label="Rasteroptionen"><Down /></Tool>
      </Group>
      <Group $w={118}>
        <Tool $w={17} aria-label="Rastertyp"><GridIcon c="#dfe0e2" /></Tool>
        <Pick><PickSelect aria-label="Rastertyp wählen"><option>Zählzeit</option></PickSelect><Down /></Pick>
      </Group>
      <Group $w={171}>
        <Tool $w={20} $big>Q</Tool>
        <Tool $w={23} aria-label="Iterativ"><Svg w={15} h={10}><path d="M0 7h2l3-5 3 6 3-6 2 4h2" stroke="#222" strokeWidth="1.300" /></Svg></Tool>
        <Pick $line><PickSelect aria-label="Quantisierung"><option>1/16</option></PickSelect><Svg w={13} h={13}><circle cx="6.500" cy="6.500" r="5" stroke="#222" strokeWidth="1.500" /><path d="M5 3.500v6l4.500-3z" fill="#222" /></Svg></Pick>
        <Tool $w={11} $line aria-label="Quantisierungsfeld"><Corner /></Tool>
      </Group>
    </Toolbar>
  );
}

function TaskApps() {
  return (
    <Apps>
      <AppButton $w={38} $r={20} aria-label="Start">
        <Svg w={38} h={38}>
          <defs><radialGradient id="orb" cx=".5" cy=".85" r=".9"><stop offset="0" stopColor="#39c8f0" /><stop offset=".45" stopColor="#1f5f96" /><stop offset="1" stopColor="#c3d3df" /></radialGradient></defs>
          <circle cx="19" cy="19" r="18" fill="url(#orb)" stroke="#24394c" />
          <path d="M11 12c3-1.500 5-1.500 8 0l-1.500 6.500c-3-1.500-5-1.500-8 0z" fill="#ef6a2c" />
          <path d="M20 12.500c3 1.500 5 1.500 8.500 0L27 19c-3 1.500-5 1.500-8 0z" fill="#8cc63e" />
          <path d="M9.300 19.500c3-1.500 5-1.500 8 0L15.800 26c-3-1.500-5-1.500-8 0z" fill="#3fa0e0" />
          <path d="M18.500 20c3 1.500 5 1.500 8 0L25 26.500c-3 1.500-5 1.500-8 0z" fill="#fcc931" />
        </Svg>
      </AppButton>
      <AppButton $w={46} $r={10} aria-label="Internet Explorer">
        <Svg w={34} h={34}>
          <path d="M27 22a10 10 0 1 1 1-5H12" stroke="#5ec6f3" strokeWidth="5.500" />
          <path d="M4 31C-1 25 9 10 20 4c6-3 11-3 10 3" stroke="#f2c634" strokeWidth="2.500" />
        </Svg>
      </AppButton>
      <AppButton $w={50} $r={12} $open $stack aria-label="Explorer">
        <Svg w={34} h={30}>
          <path d="M1 3h10l2 3h20v22H1z" fill="#ecd27c" /><path d="M3 6h28v5H3z" fill="#f7edba" />
          <path d="M6 2h4v3H6z" fill="#3c9a4a" /><path d="M14 3h4v3h-4z" fill="#c93a2b" /><path d="M23 6h5v3h-5z" fill="#3a78c9" />
          <path d="M1 10h32v18H1z" fill="#f3e08f" />
          <path d="M7 29v-9c0-2 1-3 3-3h14c2 0 3 1 3 3v9h-5v-6H12v6z" fill="#8fcbe6" stroke="#5a9cc0" />
        </Svg>
      </AppButton>
      <AppButton $w={58} $r={14} $open aria-label="Media Player">
        <Svg w={28} h={26}>
          <path d="M1 2h20v22H1z" fill="#8bbfe0" stroke="#4d7ea4" /><path d="M22.500 3v21M25.500 4v20" stroke="#a5d0ea" strokeWidth="1.800" />
          <circle cx="11" cy="13" r="8.500" fill="#ef7d22" stroke="#fbd0a0" /><path d="M8 8v10l8-5z" fill="#fff" />
        </Svg>
      </AppButton>
      <AppButton $w={38} $r={14} aria-label="Chrome">
        <Svg w={30} h={30}>
          <circle cx="15" cy="15" r="14.500" fill="#f5cd3b" />
          <path d="M2.400 7.800A14.500 14.500 0 0 1 27.600 8H15a7 7 0 0 0-6.100 10.500z" fill="#db4437" />
          <path d="M2.400 7.800A14.500 14.500 0 0 0 14.500 29.500L21 18.500a7 7 0 0 1-12.100 0z" fill="#119d58" />
          <circle cx="15" cy="15" r="6.800" fill="#fff" /><circle cx="15" cy="15" r="5.300" fill="#4285f4" />
        </Svg>
      </AppButton>
      <AppButton $w={58} $r={4} $open aria-label="Kurznotizen">
        <Svg w={34} h={28}>
          <path d="m6 1 13 3-4 16L1 15z" fill="#a4dd8c" /><path d="M9 6h15v17H9z" fill="#9fd0ea" /><path d="m14 9 15-4 4 16-16 5z" fill="#f8df52" />
        </Svg>
      </AppButton>
      <AppButton $w={50} $r={12} $open $on $stack aria-label="Cubase"><CubaseMark s={30} /></AppButton>
      <AppButton $w={58} $open aria-label="Paint">
        <Svg w={34} h={32}>
          <path d="M2 19C2 12 9 7 17 7s12 4 12 10c0 8-7 13-13 13-4 0-2-5-5-6s-3 3-5 2-4-4-4-7z" fill="#e3edf5" stroke="#93abc0" />
          <circle cx="8" cy="18" r="2.300" fill="#d84a3a" /><circle cx="12" cy="13" r="2.300" fill="#55b04a" /><circle cx="18" cy="11.500" r="2.300" fill="#f0b13a" /><circle cx="15" cy="19" r="2.300" fill="#3b5f85" />
          <path d="m17 31 5-19 3 1-5 18z" fill="#d88a3a" /><path d="M22 12c-1-4-1-7-1-11 3 1 5 2 9 1-1 5-3 8-5 11z" fill="#b08158" />
        </Svg>
      </AppButton>
    </Apps>
  );
}

export default function App() {
  return (
    <>
      <Global />
      <Screen>
        <MenuBar>
          <CubaseMark s={16} />
          <Menus>{menus.map((m) => <MenuItem key={m}>{m}</MenuItem>)}</Menus>
          <WindowTitle>Cubase Pro-Projekt - AS01</WindowTitle>
          <Caption>
            <CaptionButton $w={22} aria-label="Minimieren"><Minus /></CaptionButton>
            <CaptionButton $w={27} aria-label="Wiederherstellen"><Svg w={12} h={12}><path d="M4 1h7v7H4zM1.500 4h6v6.500h-6z" fill="#8496a7" stroke="#fff" strokeWidth="1.600" /></Svg></CaptionButton>
            <CaptionButton $w={46} aria-label="Schließen"><Cross /></CaptionButton>
          </Caption>
        </MenuBar>
        <MainToolbar />
        <InfoLine>
          {info.map(([k, v, w]) => <InfoItem key={k} $w={w}><dt>{k}</dt><dd>{v}</dd></InfoItem>)}
        </InfoLine>
        <Work>
          <Inspector>
            <Tabs><InspectorTab $on>Inspector</InspectorTab><InspectorTab>Sichtbarkeit</InspectorTab></Tabs>
            <InspectorBody><Gear /></InspectorBody>
          </Inspector>
          <TrackPanel>
            <TrackHeader>
              <ListIcon c="#838b94" s={13} /><span>19 / 19</span><Spacer />
              <Svg w={9} h={9}><path d="M4.500 0v9M0 4.500h9" stroke="#8b929a" strokeWidth="1.700" /></Svg>
              <Svg w={12} h={13}><circle cx="7" cy="5" r="4" stroke="#8b929a" strokeWidth="1.700" /><path d="M4 8 .8 12" stroke="#8b929a" strokeWidth="2" /></Svg>
            </TrackHeader>
            <TrackRows>
              {tracks.map((t, i) => <Track key={i} t={t} />)}
              <TrackRow $h={1} $indent={0}><TrackMain $pad="0" /></TrackRow>
            </TrackRows>
            <PanelFoot><span>-</span><Spacer /><Down c="#8b929a" w={10} /><Gear /></PanelFoot>
          </TrackPanel>
          <Arrange>
            <Ruler>
              <Bars>{[1, 2, 3, 4].map((n) => <Bar key={n} $on={n === 1}>{n}</Bar>)}</Bars>
              <RulerMenu aria-label="Linealoptionen"><Down c="#1d2731" /></RulerMenu>
            </Ruler>
            <ArrangeBody>
              <Grid>
                {tracks.map((t, i) => <Lane key={i} $h={heightOf(t)}>{t.line && <Automation $y={t.line} />}</Lane>)}
                <Lane $h={1} />
              </Grid>
              <SideTools>
                <Svg w={8} h={8}><path d="M1 7l6-6" stroke="#c3c9cf" strokeWidth="1.200" /></Svg>
                <VScroll $h={49}><Dot $at="left: -3px; bottom: 0" /></VScroll>
                <VScroll><Dot $at="left: -3px; top: 0" /><Dot $at="left: -3px; bottom: 0" /></VScroll>
                <Down c="#a9b0b8" />
                <Svg w={5} h={7}><path d="M0 3.500h5" stroke="#c3c9cf" /></Svg>
                <Zoom $v type="range" defaultValue={18} aria-label="Vertikaler Zoom" />
                <Svg w={5} h={7}><path d="M0 3.500h5M2.500 1v5" stroke="#c3c9cf" /></Svg>
              </SideTools>
            </ArrangeBody>
            <BottomTools>
              <HScroll><Dot $at="left: -3px; top: -3px" /><Thumb /><Dot $at="right: -3px; top: -3px" /></HScroll>
              <Down c="#a9b0b8" />
              <Svg w={5} h={7}><path d="M0 3.500h5" stroke="#c3c9cf" /></Svg>
              <Zoom type="range" defaultValue={70} aria-label="Horizontaler Zoom" />
              <Svg w={5} h={7}><path d="M0 3.500h5M2.500 1v5" stroke="#c3c9cf" /></Svg>
            </BottomTools>
          </Arrange>
        </Work>
        <Taskbar>
          <TaskApps />
          <Tray>
            <span>DE</span>
            <Svg w={20} h={5}><path d="M6 5h8l-4-4z" fill="#fff" /></Svg>
            <Svg w={16} h={16}><path d="M1.500 1v14" stroke="#fff" strokeWidth="1.500" /><path d="M3 2h5l1 1h5v7H3z" fill="#fff" /><circle cx="10.500" cy="11" r="4.500" fill="#c9302c" /><path d="m8.500 9 4 4M12.500 9l-4 4" stroke="#fff" strokeWidth="1.300" /></Svg>
            <Svg w={15} h={16}><path d="M5 4.500h9v7H5zM1 1v4h3V1M2.500 5v9h5" stroke="#fff" strokeWidth="1.300" /><path d="m7 8 7 6M14 8l-7 6" stroke="#d0202a" strokeWidth="2" /></Svg>
            <Svg w={15} h={16}><path d="M0 5h3l4-4v14l-4-4H0z" fill="#fff" /><path d="M9 5.500a4 4 0 0 1 0 5M11 3.500a7 7 0 0 1 0 9M13 2a9 9 0 0 1 0 12" stroke="#fff" /></Svg>
            <Clock>00:38<br />08.04.2018</Clock>
            <ShowDesktop aria-label="Desktop anzeigen" />
          </Tray>
        </Taskbar>
        <ConnectionsDialog />
      </Screen>
    </>
  );
}
